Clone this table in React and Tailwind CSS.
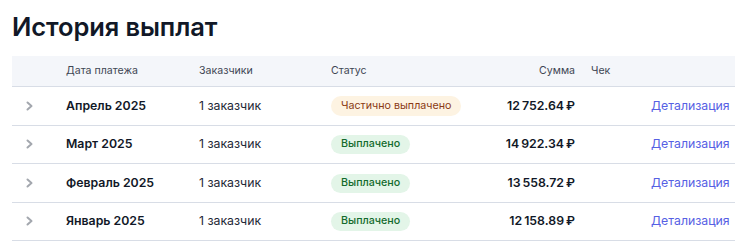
import React from "react";

const rows = [
  { month: "Апрель 2025", clients: "1 заказчик", status: "partial", amount: "12\u202F752.64\u202F₽" },
  { month: "Март 2025", clients: "1 заказчик", status: "paid", amount: "14\u202F922.34\u202F₽" },
  { month: "Февраль 2025", clients: "1 заказчик", status: "paid", amount: "13\u202F558.72\u202F₽" },
  { month: "Январь 2025", clients: "1 заказчик", status: "paid", amount: "12\u202F158.89\u202F₽" },
];

const cols = "grid grid-cols-[46px_133px_132px_150px_110px_60px_92px] items-center";

function Chevron() {
  return (
    <svg width="8" height="10" viewBox="0 0 8 10" fill="none">
      <polyline points="1.5,1.5 5.5,5 1.5,8.5" stroke="#a3a7ae" strokeWidth="2" strokeLinecap="round" strokeLinejoin="round" />
    </svg>
  );
}

export default function App() {
  return (
    <div className="w-[751px] h-[242px] bg-white px-3 pt-[11px] font-['Inter',sans-serif] text-[#111827] overflow-hidden">
      <h1 className="text-[25.5px] leading-[32px] font-semibold tracking-[-0.1px] mb-[13px]">История выплат</h1>
      <div className="w-[723px]">
        <div className={`${cols} h-[31px] bg-[#f4f6fa] border-b border-[#d8dde6] text-[10.6px] text-[#3f4654]`}>
          <div />
          <div className="px-2">Дата платежа</div>
          <div className="px-2">Заказчики</div>
          <div className="px-2">Статус</div>
          <div className="px-2 text-right">Сумма</div>
          <div className="px-2">Чек</div>
          <div />
        </div>
        {rows.map((r) => (
          <div key={r.month} className={`${cols} h-[38.5px] border-b border-[#d8dde6] text-[12.3px]`}>
            <div className="pl-[14px] flex items-center">
              <Chevron />
            </div>
            <div className="px-2 font-semibold whitespace-nowrap">{r.month}</div>
            <div className="px-2 text-[#1f2937] whitespace-nowrap">{r.clients}</div>
            <div className="px-2">
              {r.status === "partial" ? (
                <span className="inline-flex items-center whitespace-nowrap h-[20px] px-[10px] rounded-full bg-[#fdf3e2] text-[#8a3a14] text-[10.7px]">
                  Частично выплачено
                </span>
              ) : (
                <span className="inline-flex items-center whitespace-nowrap h-[19px] px-[10px] rounded-full bg-[#e3f5e8] text-[#136b2d] text-[10.7px] font-medium">
                  Выплачено
                </span>
              )}
            </div>
            <div className="px-2 text-right font-semibold whitespace-nowrap">{r.amount}</div>
            <div className="px-2" />
            <div className="px-2 text-right text-[#5660e4] whitespace-nowrap">Детализация</div>
          </div>
        ))}
      </div>
    </div>
  );
}
